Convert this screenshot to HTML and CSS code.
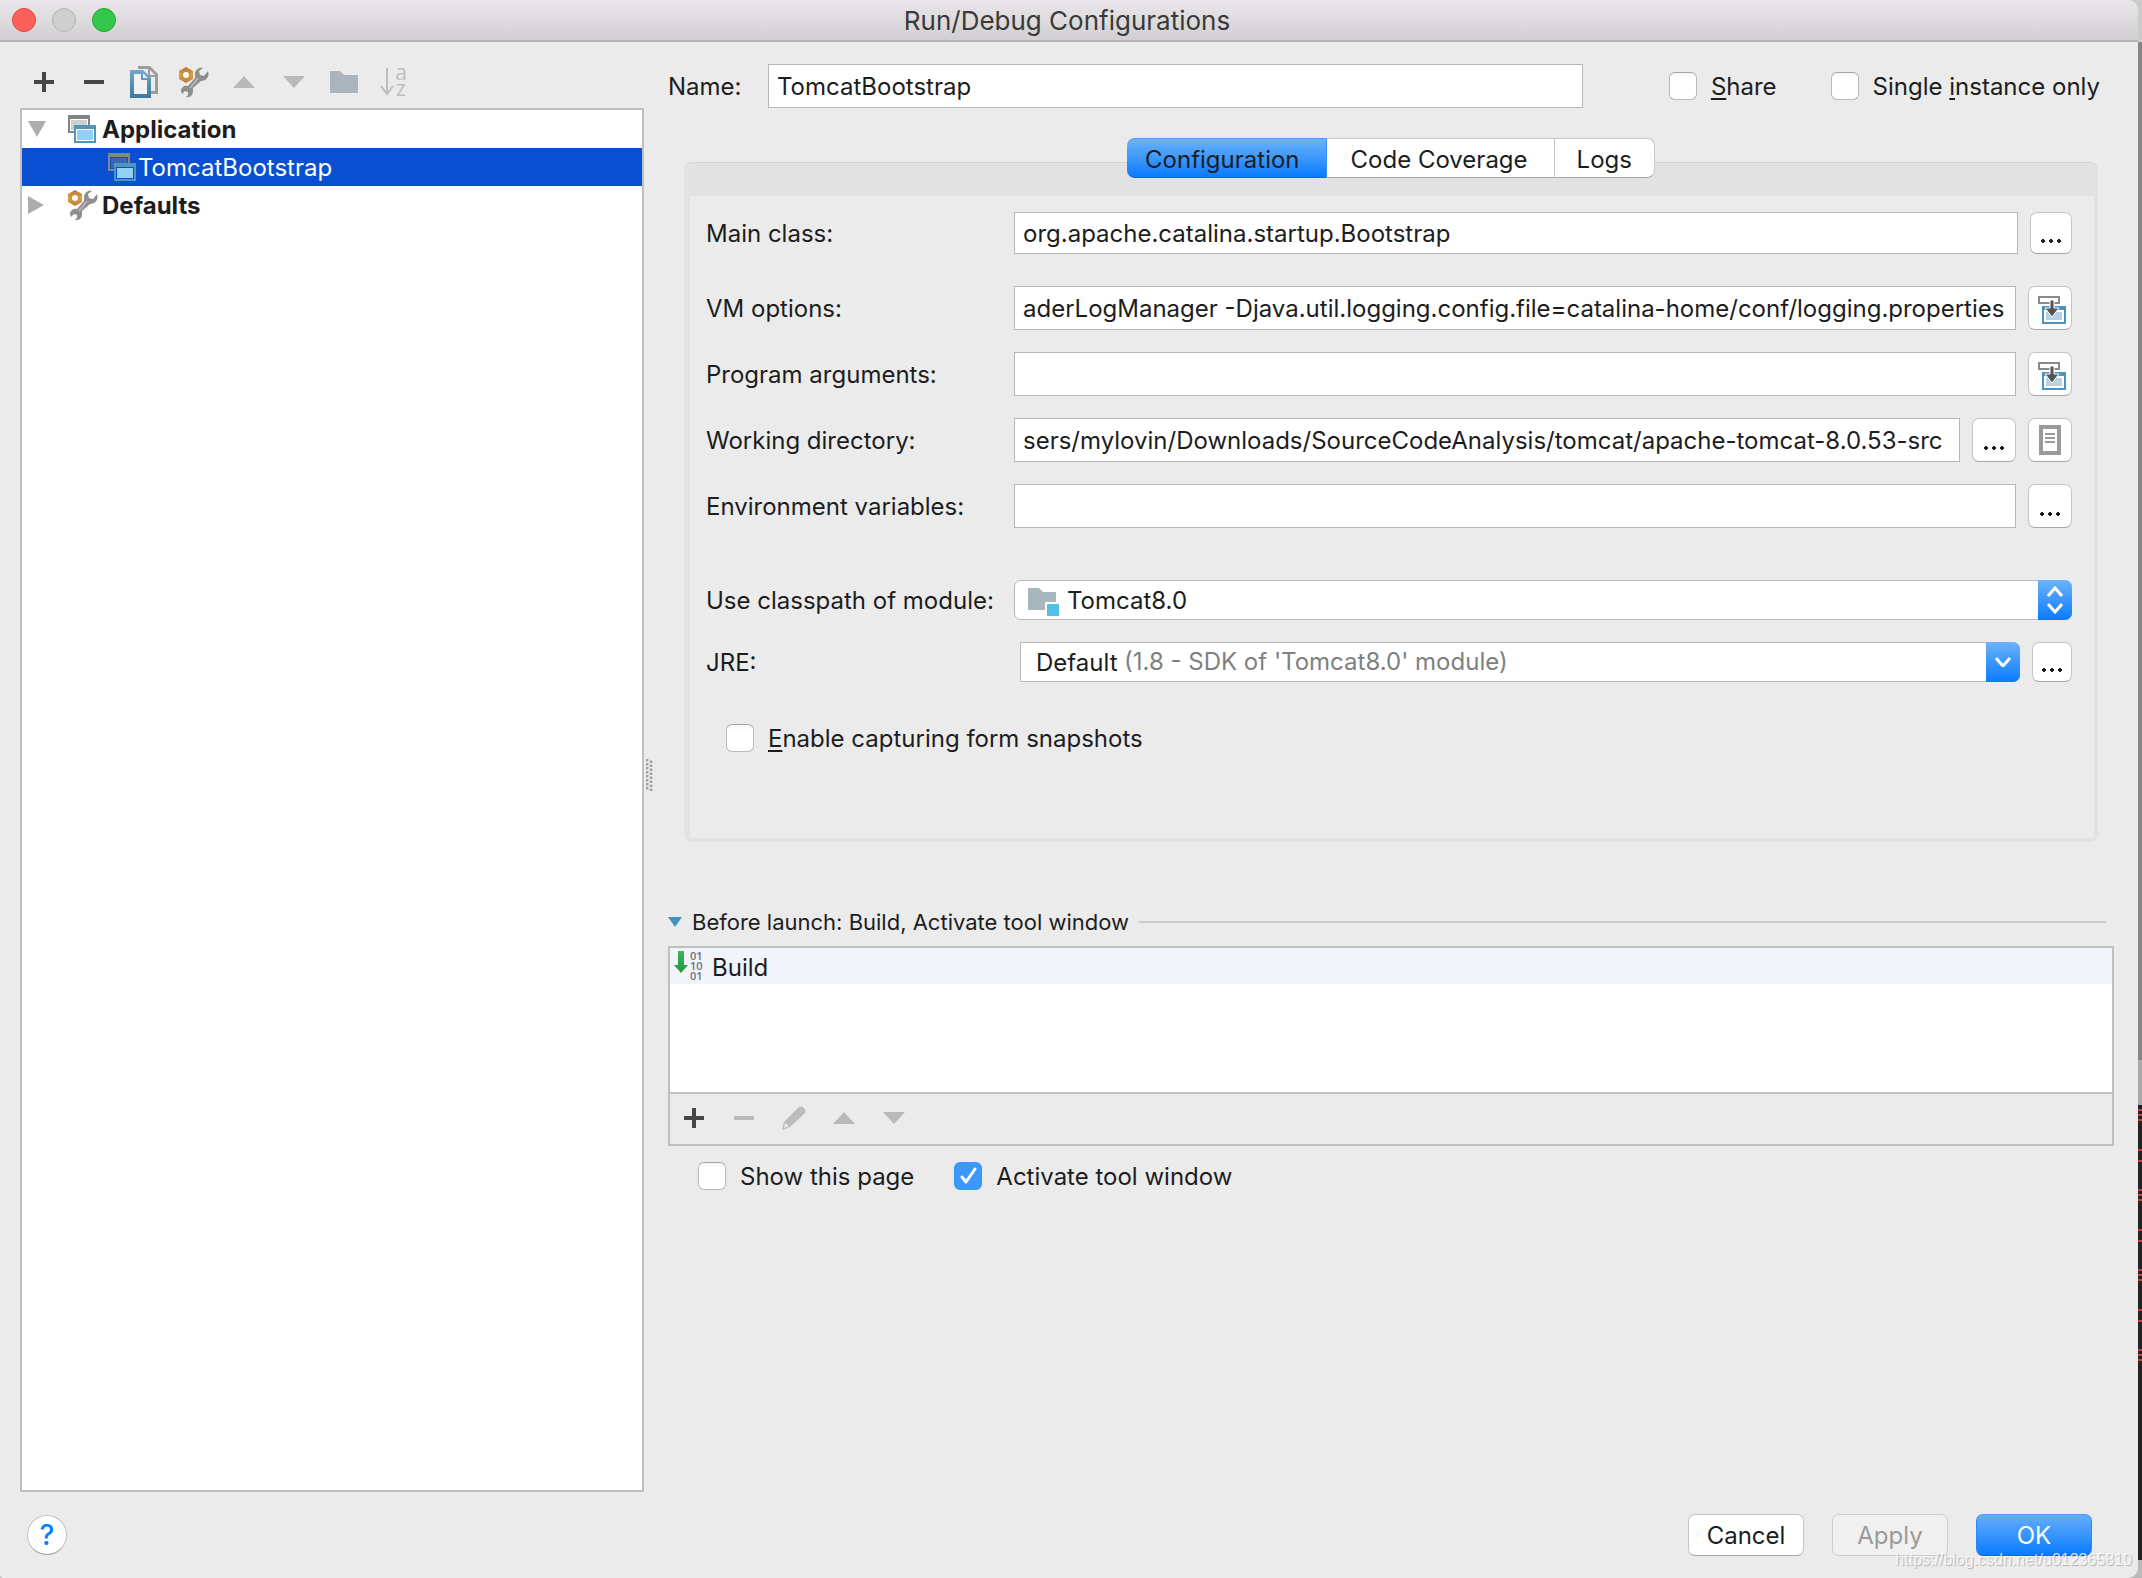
FILE: index.html
```html
<!DOCTYPE html>
<html lang="en">
<head>
<meta charset="utf-8">
<title>Run/Debug Configurations</title>
<link rel="stylesheet" href="styles.css">
</head>
<body>
<svg class="sprite" aria-hidden="true">
  <defs>
    <linearGradient id="g-nut" x1="0" y1="0" x2="0" y2="1"><stop offset="0" stop-color="#b5763f"/><stop offset=".5" stop-color="#e0a03c"/><stop offset="1" stop-color="#b97a3c"/></linearGradient>
    <linearGradient id="g-page" x1="0" y1="0" x2="0" y2="1"><stop offset="0" stop-color="#6fa9c9"/><stop offset="1" stop-color="#3f789f"/></linearGradient>
    <linearGradient id="g-arrow" x1="0" y1="0" x2="0" y2="1"><stop offset="0" stop-color="#3fb45c"/><stop offset="1" stop-color="#1f9a3c"/></linearGradient>
  </defs>
  <symbol id="i-plus" viewBox="0 0 20 20"><path d="M8 0h4v8h8v4h-8v8H8v-8H0V8h8z"/></symbol>
  <symbol id="i-minus" viewBox="0 0 20 20"><path d="M0 8h20v4H0z"/></symbol>
  <symbol id="i-up" viewBox="0 0 22 12"><path d="M11 0l11 12H0z"/></symbol>
  <symbol id="i-down" viewBox="0 0 22 12"><path d="M0 0h22L11 12z"/></symbol>
  <symbol id="i-copy" viewBox="0 0 28 32">
    <path d="M8 0h12l8 8v20h-7v-3h4V11h-7V3H8z" fill="#9c9c9c"/><path d="M20 4v5h5z" fill="#ebebeb"/>
    <path d="M0 4h13l8 8v20H0z" fill="url(#g-page)"/><path d="M4 8h7v6h6v14H4z" fill="#f2f2f2"/><path d="M13 7v5h5z" fill="#e8f0f5"/>
  </symbol>
  <symbol id="i-tools" viewBox="0 0 30 31">
    <path d="M29 4l-4 5-4-1-1-4 4-3c-4-1-8 2-8 6l0 4-7 8c-3-1-7 1-7 5l1 3 3-3 3 1v3l-2 2c4 1 7-2 7-6v-3l8-7c5 0 9-4 7-10z" fill="#8e8e8e"/>
    <path d="M19 11l-8 10" stroke="#b5b5b5" stroke-width="2"/>
    <path d="M7 0l7 4v8l-7 4-7-4V4z" fill="url(#g-nut)"/><circle cx="7" cy="8" r="3" fill="#fff"/><circle cx="7" cy="8" r="4" fill="none" stroke="#c98a35"/>
  </symbol>
  <symbol id="i-folder" viewBox="0 0 28 22"><path d="M0 0h10l4 4h14v18H0z" fill="#aab4ba"/></symbol>
  <symbol id="i-app" viewBox="0 0 28 28">
    <path d="M0 0h22v18H0z" fill="#858585"/><path class="gap" d="M2 4h18v12H2z"/><path class="back" d="M3 5h16v10H3z"/>
    <path d="M6 10h22v18H6z" fill="#5096bb"/><path class="gap" d="M8 14h18v12H8z"/><path d="M9 15h16v10H9z" fill="#93d0f4"/>
  </symbol>
  <symbol id="i-insert" viewBox="0 0 28 28">
    <path d="M1 1h20v6H1z" fill="#fff" stroke="#8a8a8a" stroke-width="2"/>
    <path d="M5 12h22v15H5z" fill="#fff" stroke="#4a94be" stroke-width="2"/><path d="M4 10h24v4H4z" fill="#4a94be"/><path d="M8 16h16v8H8z" fill="#b5d3e5"/>
    <path d="M12 4h4v8h5l-7 9-7-9h5z" fill="#545454" stroke="#fff"/>
  </symbol>
  <symbol id="i-doc" viewBox="0 0 22 30"><path d="M2 2h18v26H2z" fill="#fff" stroke="#9a9a9a" stroke-width="4"/><path d="M6 9h10M6 13h10M6 17h10" stroke="#9a9a9a" stroke-width="2"/></symbol>
  <symbol id="i-module" viewBox="0 0 32 28"><path d="M0 0h11l4 4h13v10H17v8H0z" fill="#aab6bd"/><path d="M19 16h12v12H19z" fill="#52bfe6"/></symbol>
  <symbol id="i-pencil" viewBox="0 0 24 24"><path d="M0 24l2-8L16 2q3-3 6 0t0 6L8 21z" fill="#bcbcbc"/><path d="M3 17l4 3-5 2z" fill="#ebebeb"/></symbol>
  <symbol id="i-open" viewBox="0 0 18 16"><path d="M0 0h18L9 16z"/></symbol>
  <symbol id="i-closed" viewBox="0 0 16 18"><path d="M0 0l16 9L0 18z"/></symbol>
</svg>

<div class="screen">
  <div class="window">
    <header class="titlebar">
      <div class="lights">
        <button class="light light-close" aria-label="Close"></button>
        <button class="light light-min" aria-label="Minimize" disabled></button>
        <button class="light light-zoom" aria-label="Zoom"></button>
      </div>
      <h1 class="title">Run/Debug Configurations</h1>
    </header>

    <main class="content">
      <aside class="sidebar">
        <div class="toolbar">
          <button class="tool" aria-label="Add"><svg width="20" height="20"><use href="#i-plus"/></svg></button>
          <button class="tool" aria-label="Remove"><svg width="20" height="20"><use href="#i-minus"/></svg></button>
          <button class="tool" aria-label="Copy"><svg width="28" height="32"><use href="#i-copy"/></svg></button>
          <button class="tool" aria-label="Edit defaults"><svg width="30" height="31"><use href="#i-tools"/></svg></button>
          <button class="tool" aria-label="Move up" disabled><svg width="22" height="12"><use href="#i-up"/></svg></button>
          <button class="tool" aria-label="Move down" disabled><svg width="22" height="12"><use href="#i-down"/></svg></button>
          <button class="tool" aria-label="New folder" disabled><svg width="28" height="22"><use href="#i-folder"/></svg></button>
          <button class="tool tool-sort" aria-label="Sort" disabled>
            <svg width="14" height="30" viewBox="0 0 14 30"><path d="M7 1v26M1 19l6 8 6-8"/></svg>
            <span class="sort-letters"><span>a</span><span>z</span></span>
          </button>
        </div>
        <ul class="tree">
          <li class="node node-group"><span class="twist"><svg width="18" height="16"><use href="#i-open"/></svg></span><span class="node-icon"><svg width="28" height="28"><use href="#i-app"/></svg></span><span class="node-text">Application</span></li>
          <li class="node node-child selected"><span class="node-icon"><svg width="28" height="28"><use href="#i-app"/></svg></span><span class="node-text">TomcatBootstrap</span></li>
          <li class="node node-group"><span class="twist"><svg width="16" height="18"><use href="#i-closed"/></svg></span><span class="node-icon"><svg width="30" height="31"><use href="#i-tools"/></svg></span><span class="node-text">Defaults</span></li>
        </ul>
      </aside>
      <div class="splitter"><span class="grip"></span></div>

      <section class="editor">
        <div class="name-row">
          <label class="name-label" for="name">Name:</label>
          <input class="field name-field" id="name" type="text" value="TomcatBootstrap">
          <label class="check check-share"><input type="checkbox"><span><u>S</u>hare</span></label>
          <label class="check"><input type="checkbox"><span>Single <u>i</u>nstance only</span></label>
        </div>

        <div class="tabs" role="tablist">
          <button class="tab active" role="tab" aria-selected="true">Configuration</button>
          <button class="tab" role="tab">Code Coverage</button>
          <button class="tab" role="tab">Logs</button>
        </div>

        <div class="panel">
          <div class="panel-body">
            <div class="row row-main">
              <label for="main-class">Main class:</label>
              <input class="field" id="main-class" type="text" value="org.apache.catalina.startup.Bootstrap">
              <button class="mini" aria-label="Browse main class"><span class="dots"></span></button>
            </div>
            <div class="row">
              <label for="vm">VM options:</label>
              <input class="field" id="vm" type="text" value="aderLogManager -Djava.util.logging.config.file=catalina-home/conf/logging.properties">
              <button class="mini mini-insert" aria-label="Expand"><svg width="28" height="28"><use href="#i-insert"/></svg></button>
            </div>
            <div class="row">
              <label for="args">Program arguments:</label>
              <input class="field" id="args" type="text">
              <button class="mini mini-insert" aria-label="Expand"><svg width="28" height="28"><use href="#i-insert"/></svg></button>
            </div>
            <div class="row">
              <label for="cwd">Working directory:</label>
              <input class="field" id="cwd" type="text" value="sers/mylovin/Downloads/SourceCodeAnalysis/tomcat/apache-tomcat-8.0.53-src">
              <button class="mini" aria-label="Browse directory"><span class="dots"></span></button>
              <button class="mini" aria-label="Insert path"><svg width="22" height="30"><use href="#i-doc"/></svg></button>
            </div>
            <div class="row">
              <label for="env">Environment variables:</label>
              <input class="field" id="env" type="text">
              <button class="mini" aria-label="Edit variables"><span class="dots"></span></button>
            </div>
            <div class="row row-module">
              <label for="module">Use classpath of module:</label>
              <div class="combo combo-module">
                <svg class="combo-icon" width="32" height="28"><use href="#i-module"/></svg>
                <select id="module"><option>Tomcat8.0</option></select>
                <span class="cap"><svg width="16" height="28" viewBox="0 0 16 28"><path d="M1 10l7-8 7 8M1 18l7 8 7-8"/></svg></span>
              </div>
            </div>
            <div class="row row-jre">
              <label for="jre">JRE:</label>
              <div class="combo combo-jre">
                <select id="jre"><option>Default</option></select>
                <span class="combo-hint">(1.8 - SDK of 'Tomcat8.0' module)</span>
                <span class="cap"><svg width="16" height="10" viewBox="0 0 16 10"><path d="M1 1l7 8 7-8"/></svg></span>
              </div>
              <button class="mini" aria-label="Browse JRE"><span class="dots"></span></button>
            </div>
            <label class="check check-snap"><input type="checkbox"><span><u>E</u>nable capturing form snapshots</span></label>
          </div>
        </div>

        <h2 class="launch-title"><svg width="14" height="10" viewBox="0 0 14 10"><path d="M0 0h14L7 10z"/></svg>Before launch: Build, Activate tool window</h2>
        <div class="launch">
          <ul class="tasks">
            <li class="task">
              <span class="build-icon">
                <svg width="14" height="22" viewBox="0 0 14 22"><path d="M4 0h6v14h4l-7 8-7-8h4z" fill="url(#g-arrow)"/></svg>
                <span class="bits"><span>01</span><span>10</span><span>01</span></span>
              </span>
              <span class="node-text">Build</span>
            </li>
          </ul>
          <div class="toolbar launch-tools">
            <button class="tool" aria-label="Add task"><svg width="20" height="20"><use href="#i-plus"/></svg></button>
            <button class="tool" aria-label="Remove task" disabled><svg width="20" height="20"><use href="#i-minus"/></svg></button>
            <button class="tool" aria-label="Edit task" disabled><svg width="24" height="24"><use href="#i-pencil"/></svg></button>
            <button class="tool" aria-label="Task up" disabled><svg width="22" height="12"><use href="#i-up"/></svg></button>
            <button class="tool" aria-label="Task down" disabled><svg width="22" height="12"><use href="#i-down"/></svg></button>
          </div>
        </div>
        <div class="launch-checks">
          <label class="check"><input type="checkbox"><span>Show this page</span></label>
          <label class="check"><input type="checkbox" checked><span>Activate tool window</span></label>
        </div>
      </section>
    </main>

    <footer class="footer">
      <button class="help" aria-label="Help">?</button>
      <div class="actions">
        <button class="action">Cancel</button>
        <button class="action" disabled>Apply</button>
        <button class="action primary">OK</button>
      </div>
      <span class="watermark">https://blog.csdn.net/u012365810</span>
    </footer>
  </div>
</div>
</body>
</html>
```
FILE: styles.css
```css
* { box-sizing: border-box; }
body { margin: 0; }
body, button, input, select {
  font-family: Inter, "Liberation Sans", sans-serif;
  font-size: 24px;
  color: #1d1d1d;
}
button, input, select { margin: 0; padding: 0; }
button { border: 0; background: none; }
ul { list-style: none; margin: 0; padding: 0; }
svg { display: block; flex: none; }
.sprite { position: absolute; width: 0; height: 0; }

/* What shows of the desktop beside the dialog */
.screen {
  padding-right: 4px;
  background:
    repeating-linear-gradient(transparent 0 2px, #c4423e 2px 4px, transparent 4px 5px) right 1107px / 4px 16px no-repeat,
    repeating-linear-gradient(transparent 0 2px, #c4423e 2px 4px, transparent 4px 5px) right 1187px / 4px 16px no-repeat,
    repeating-linear-gradient(transparent 0 2px, #c4423e 2px 4px, transparent 4px 5px) right 1267px / 4px 16px no-repeat,
    repeating-linear-gradient(transparent 0 2px, #c4423e 2px 4px, transparent 4px 5px) right 1347px / 4px 16px no-repeat,
    linear-gradient(#c4423e 0 2px, transparent 2px 11px, #c4423e 11px 13px) right 1149px / 4px 13px no-repeat,
    linear-gradient(#c4423e 0 2px, transparent 2px 11px, #c4423e 11px 13px) right 1229px / 4px 13px no-repeat,
    linear-gradient(#c4423e 0 2px, transparent 2px 11px, #c4423e 11px 13px) right 1309px / 4px 13px no-repeat,
    linear-gradient(#cbcbcb 0 42px, #868686 42px 1060px, #a9a9a9 1060px 1105px, #222 1105px 1560px, #b9b9b9 1560px);
}
.window {
  display: flex;
  flex-direction: column;
  min-height: 100vh;
  background: #ebebeb;
  border-radius: 0 10px 10px 4px;
}

.titlebar {
  display: grid;
  grid-template-columns: 1fr auto 1fr;
  align-items: center;
  height: 42px;
  padding: 0 16px 0 12px;
  border-bottom: 2px solid #b4b2b4;
  border-radius: 0 10px 0 0;
  background: linear-gradient(#e9e7e9, #d1cfd1);
}
.lights { display: flex; gap: 16px; }
.light { width: 24px; height: 24px; border-radius: 50%; border: 1px solid; }
.light-close { background: #fc605b; border-color: #e0443f; }
.light-min { background: #d0cfd0; border-color: #b5b4b5; }
.light-zoom { background: #34c84a; border-color: #1fa834; }
.title { margin: 0; padding-top: 2px; font-size: 26px; font-weight: 400; line-height: 32px; color: #3a3a3a; }

.content { flex: 1; display: flex; }
.sidebar { flex: none; width: 644px; padding: 16px 0 0 20px; display: flex; flex-direction: column; }
.toolbar { display: flex; align-items: center; height: 50px; }
.tool {
  width: 50px;
  height: 48px;
  padding: 0 2px 2px 0;
  display: flex;
  align-items: center;
  justify-content: center;
  fill: #454545;
}
.tool:disabled { fill: #b9b9b9; }
.tool-sort path { fill: none; stroke: #bdbdbd; stroke-width: 2; }
.sort-letters {
  display: flex;
  flex-direction: column;
  width: 14px;
  padding-bottom: 4px;
  align-items: center;
  font: 21px/16px "Open Sans", sans-serif;
  color: #bdbdbd;
}

.tree { flex: 1; background: #fff; border: 2px solid #bfbfbf; }
.node { display: flex; align-items: center; height: 38px; line-height: 32px; }
.node-text { padding-top: 2px; }
.node-group { font-weight: 700; }
.twist { width: 44px; display: flex; padding-left: 6px; fill: #adadad; }
.node-icon { width: 36px; display: flex; align-items: center; padding-left: 2px; }
.node-child { padding-left: 84px; }
.node-child .node-icon { width: 32px; }
.gap { fill: var(--icon-gap, #fff); }
.back { fill: var(--icon-back, #cfcfcf); }
.selected { --icon-gap: #0850d1; --icon-back: #3c66b4; background: #0850d1; color: #fff; }

.splitter { flex: none; width: 24px; padding: 16px 0 0 2px; display: flex; align-items: center; }
.grip {
  width: 8px;
  height: 32px;
  background:
    radial-gradient(circle at 1px 1px, #a0a0a0 1px, transparent 2px) 0 0 / 8px 4px,
    radial-gradient(circle at 5px 3px, #a0a0a0 1px, transparent 2px) 0 0 / 8px 4px;
}

.editor { flex: 1; min-width: 0; padding: 22px 24px 0 0; }
.name-row { display: flex; align-items: center; }
.name-label { width: 100px; }
.field {
  flex: 1;
  min-width: 0;
  height: 44px;
  padding: 0 8px;
  border: 1px solid #b6b6b6;
  border-radius: 0;
  background: #fff;
}
.check { display: flex; align-items: center; gap: 14px; line-height: 26px; white-space: nowrap; }
.check span { padding-top: 2px; }
.check input {
  appearance: none;
  flex: none;
  width: 28px;
  height: 28px;
  border: 1px solid #b9b9b9;
  border-top-color: #a5a5a5;
  border-radius: 6px;
  background: linear-gradient(#f4f4f4, #fff 5px);
}
.check input:checked {
  border-color: #3a94f8;
  background: #3b99fc url("data:image/svg+xml,%3Csvg xmlns='http://www.w3.org/2000/svg' viewBox='0 0 26 26'%3E%3Cpath d='M7 14l4 5 9-13' fill='none' stroke='white' stroke-width='3' stroke-linecap='round' stroke-linejoin='round'/%3E%3C/svg%3E") center / 26px;
}
.check u { text-decoration-thickness: 2px; text-underline-offset: 3px; text-decoration-skip-ink: none; }
.check-share { margin: 0 54px 0 86px; }
.name-row .check:last-child { margin-right: 14px; }

.tabs { position: relative; z-index: 1; display: flex; justify-content: center; margin: 30px 0 -16px; }
.tab {
  height: 40px;
  padding: 2px 26px 0 24px;
  background: #fff;
  border: 1px solid #c8c8c8;
  border-bottom-color: #a8a8a8;
  border-left-width: 0;
}
.tab:first-child { border-radius: 8px 0 0 8px; padding: 2px 26px 0 18px; }
.tab:last-child { border-radius: 0 8px 8px 0; padding: 2px 22px 0; }
.tab.active { background: linear-gradient(#6cb3fa, #0a7bff); border-color: #4a9bf5 #3a90f5 #0a66e8; }

.panel { margin: 0 16px; padding: 33px 4px 4px 6px; background: #e2e2e2; border-top: 1px solid #d3d3d3; border-radius: 8px; }
.panel-body { padding: 16px 22px 86px 16px; background: #ebebeb; }
.row { display: flex; align-items: center; gap: 12px; margin-bottom: 22px; line-height: 32px; }
.row > label { flex: none; width: 296px; padding-top: 2px; white-space: nowrap; }
.row-main { margin-bottom: 32px; }
.row-main .field { height: 42px; }
.row-main .mini { width: 42px; height: 42px; }
.mini {
  flex: none;
  width: 44px;
  height: 44px;
  display: flex;
  align-items: center;
  justify-content: center;
  background: #fff;
  border: 1px solid #c4c4c4;
  border-bottom-color: #a6a6a6;
  border-radius: 7px;
}
.mini-insert { padding: 4px 0 0 4px; }
.dots { width: 24px; height: 4px; margin-top: 16px; background: radial-gradient(circle, #1d1d1d 2px, transparent 2px) 0 0 / 8px 4px; }

.row-module { margin-top: 52px; }
.combo { position: relative; flex: 1; display: flex; height: 40px; }
.combo select {
  appearance: none;
  flex: 1;
  background: #fff;
  border: 1px solid #b8b8b8;
}
.combo-module select { padding-left: 52px; border-radius: 7px; }
.combo-icon { position: absolute; left: 14px; top: 8px; }
.combo-jre { margin-left: 6px; }
.combo-jre select { padding-left: 15px; border-radius: 0 7px 7px 0; }
.combo-hint { position: absolute; left: 104px; top: 4px; color: #808080; pointer-events: none; }
.cap {
  position: absolute;
  right: 0;
  top: 0;
  width: 34px;
  height: 40px;
  display: flex;
  align-items: center;
  justify-content: center;
  border-radius: 0 7px 7px 0;
  background: linear-gradient(#6cb3fa, #0a7bff);
  fill: none;
  stroke: #fff;
  stroke-width: 3;
  pointer-events: none;
}
.row-jre { margin-bottom: 42px; }
.row-jre .mini { width: 40px; height: 40px; }
.check-snap { margin-left: 20px; }

.launch-title {
  display: flex;
  align-items: center;
  gap: 10px;
  margin: 64px 8px 8px 0;
  font-size: 22px;
  font-weight: 400;
  line-height: 32px;
  fill: #4391be;
}
.launch-title::after { content: ""; flex: 1; height: 2px; background: #cacaca; }
.launch { border: 2px solid #bfbfbf; }
.tasks { height: 144px; background: #fff; }
.task { display: flex; align-items: center; gap: 8px; height: 36px; padding-left: 4px; background: #f1f5fb; }
.build-icon { display: flex; gap: 2px; width: 30px; height: 30px; }
.bits {
  display: flex;
  flex-direction: column;
  font: 600 11px/10px "Open Sans", sans-serif;
  color: #707070;
}
.launch-tools { height: 52px; border-top: 2px solid #bfbfbf; }
.launch-checks { display: flex; gap: 40px; margin: 16px 0 0 30px; }

.footer { position: relative; display: flex; align-items: center; justify-content: space-between; padding: 22px 46px 22px 27px; }
.help {
  width: 40px;
  height: 40px;
  border-radius: 50%;
  border: 1px solid #c2c2c2;
  border-bottom-color: #a4a4a4;
  background: #fff;
  color: #087dff;
  font-size: 28px;
  font-weight: 500;
}
.actions { display: flex; gap: 28px; }
.action { width: 116px; height: 42px; border: 1px solid #c4c4c4; border-bottom-color: #a6a6a6; border-radius: 7px; background: #fff; }
.action:disabled { background: #f0f0f0; color: #9a9a9a; border-color: #cdcdcd; }
.action.primary { background: linear-gradient(#64aefa, #0a7bff); border-color: #4a9bf5 #2d88f5 #0a66e8; color: #fff; }
.watermark {
  position: absolute;
  right: 6px;
  bottom: 8px;
  font: 16px/20px "Liberation Sans", sans-serif;
  color: rgba(255, 255, 255, 0.8);
  text-shadow: 1px 1px 1px rgba(0, 0, 0, 0.25);
  pointer-events: none;
}
```
